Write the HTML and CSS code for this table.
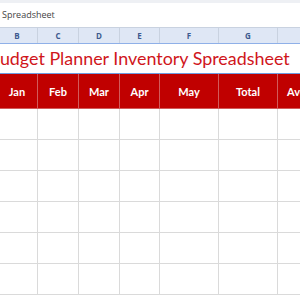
FILE: index.html
```html
<!DOCTYPE html>
<html>
<head>
    <meta charset="UTF-8">
    <title>Budget Planner Inventory Spreadsheet</title>
    <link rel="stylesheet" href="styles.css">
</head>
<body>
    <div class="app">
        <div class="toolbar"></div>
        <div class="docbar">Spreadsheet</div>

        <div class="sheet">
            <table class="grid">
                <colgroup>
                    <col class="w-narrow">
                    <col class="w-narrow">
                    <col class="w-narrow">
                    <col class="w-small">
                    <col class="w-wide">
                    <col class="w-wide">
                    <col class="w-wide">
                </colgroup>
                <thead>
                    <tr class="letters">
                        <th>B</th><th>C</th><th>D</th><th>E</th><th>F</th><th>G</th><th>H</th>
                    </tr>
                </thead>
                <tbody>
                    <tr class="title">
                        <td colspan="7"><span>Budget Planner Inventory Spreadsheet</span></td>
                    </tr>
                    <tr class="head">
                        <th>Jan</th><th>Feb</th><th>Mar</th><th>Apr</th><th>May</th><th>Total</th><th>Average</th>
                    </tr>
                    <tr class="row"><td></td><td></td><td></td><td></td><td></td><td></td><td></td></tr>
                    <tr class="row"><td></td><td></td><td></td><td></td><td></td><td></td><td></td></tr>
                    <tr class="row"><td></td><td></td><td></td><td></td><td></td><td></td><td></td></tr>
                    <tr class="row"><td></td><td></td><td></td><td></td><td></td><td></td><td></td></tr>
                    <tr class="row"><td></td><td></td><td></td><td></td><td></td><td></td><td></td></tr>
                    <tr class="row"><td></td><td></td><td></td><td></td><td></td><td></td><td></td></tr>
                </tbody>
            </table>
        </div>
    </div>
</body>
</html>
```

FILE: styles.css
```css
html, body {
    margin: 0;
    padding: 0;
    background: #ffffff;
    overflow: hidden;
}
.app {
    width: 300px;
    height: 300px;
    overflow: hidden;
    font-family: Lato, 'Open Sans', sans-serif;
}
.toolbar {
    height: 3px;
    background-color: #eef0f4;
}
.docbar {
    height: 24px;
    padding-left: 2px;
    font-family: 'Open Sans', sans-serif;
    font-size: 9px;
    line-height: 23px;
    color: #444;
}
.sheet {
    margin-left: -4px;
}
.grid {
    border-collapse: collapse;
    table-layout: fixed;
    width: 341px;
}
.w-narrow { width: 41px; }
.w-small { width: 40px; }
.w-wide { width: 59px; }

.grid th,
.grid td {
    padding: 0;
    border: 1px solid #dadada;
}
.letters th {
    height: 15px;
    background-color: #dfe7f5;
    border-color: #c9d2e0;
    border-bottom: 1px solid #8fb0e8;
    color: #3d5a8f;
    font-family: 'Open Sans', sans-serif;
    font-size: 8px;
    font-weight: bold;
}
.title td {
    height: 29px;
    border-left: none;
    border-right: none;
    border-bottom: 1px solid #6f9be0;
    white-space: nowrap;
}
.title span {
    display: block;
    margin-left: -8px;
    color: #d0161b;
    font-size: 17.9px;
    line-height: 29px;
}
.head th {
    height: 34px;
    background-color: #c00000;
    border-color: #d25a5a;
    color: #ffffff;
    font-size: 11px;
    font-weight: bold;
    white-space: nowrap;
    overflow: hidden;
}
.row td {
    height: 30px;
}
```
